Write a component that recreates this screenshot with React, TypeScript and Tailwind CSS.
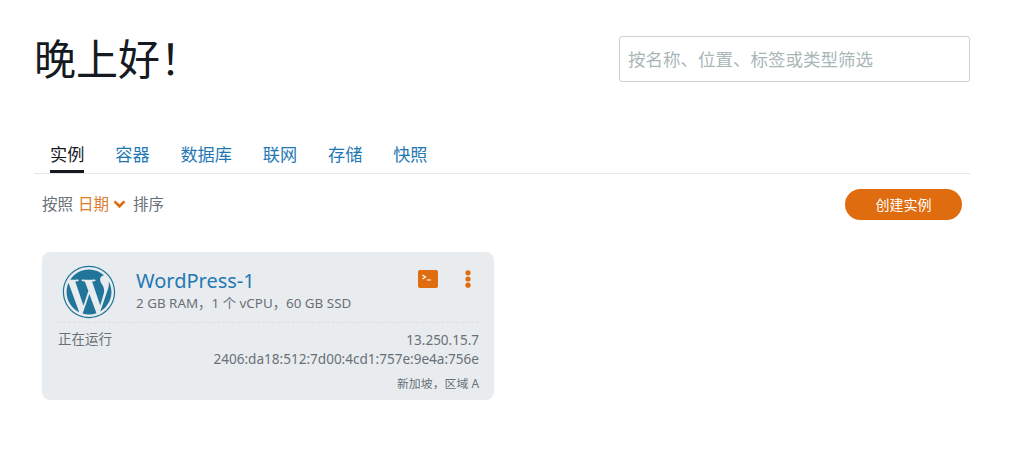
import { FaWordpress } from 'react-icons/fa'

const tabs = [
  { label: '实例', active: true },
  { label: '容器' },
  { label: '数据库' },
  { label: '联网' },
  { label: '存储' },
  { label: '快照' },
]

const fontStack = "font-['Noto_Sans','Noto_Sans_CJK_SC',sans-serif]"

export default function App() {
  return (
    <div className={`h-[465px] w-[1024px] overflow-hidden bg-white ${fontStack}`}>
      <div className="ml-[34px] w-[936px]">
        <header className="flex h-[102px] items-start justify-between pt-[36px]">
          <h1 className="text-[42px] leading-[46px] font-normal text-[#16191f]">晚上好！</h1>
          <input
            type="text"
            placeholder="按名称、位置、标签或类型筛选"
            className="h-[46px] w-[351px] rounded-[3px] border border-[#c9d2d6] bg-white px-2 text-[17.5px] outline-none placeholder:text-[#aab7b8]"
          />
        </header>

        <nav className="mt-[33px] flex h-[39px] items-start gap-[30.8px] border-b border-[#e4e7e9] pl-4 pt-[8px]">
          {tabs.map((tab) => (
            <a
              key={tab.label}
              className={`h-[30px] text-[17.2px] leading-[24px] ${
                tab.active ? 'border-b-[3px] border-[#16191f] text-[#16191f]' : 'text-[#1f78b4]'
              }`}
            >
              {tab.label}
            </a>
          ))}
        </nav>

        <div className="mt-[15px] flex h-[31px] items-center justify-between pl-2 pr-2">
          <div className="flex items-center text-[15.5px] text-[#687078]">
            <span>按照</span>
            <span className="ml-[5px] text-[#e07a2c]">日期</span>
            <svg viewBox="0 0 14 10" className="ml-[4px] h-[9px] w-[13px]" fill="none" stroke="#df6c0f" strokeWidth="3">
              <path d="M1.5 1.5 7 7l5.5-5.5" />
            </svg>
            <span className="ml-[7px]">排序</span>
          </div>
          <button
            type="button"
            className="h-[31px] w-[117px] rounded-full bg-[#df6c0f] text-[14px] text-white"
          >
            创建实例
          </button>
        </div>

        <section className="ml-2 mt-[32px] h-[148px] w-[452px] rounded-[8px] bg-[#e9ecee] pl-[16px] pr-[15px] pt-[13px]">
          <div className="flex h-[58px] items-start border-b border-dashed border-[#d9dee0]">
            <FaWordpress className="ml-[4px] h-[54px] w-[54px] text-[#21759b]" />
            <div className="ml-[20px] flex-1">
              <div className="mt-[2px] text-[20px] leading-[28px] text-[#1f78b4]">WordPress-1</div>
              <div className="text-[13.4px] leading-[17px] text-[#687078]">2 GB RAM，1 个 vCPU，60 GB SSD</div>
            </div>
            <div className="flex items-start gap-[27px] pr-[8px] pt-[5px]">
              <div className="flex h-[18px] w-[20px] rounded-[2px] bg-[#df6c0f] pl-[3px] pt-[3px]">
                <svg viewBox="0 0 14 12" className="h-[12px] w-[14px]" fill="none" stroke="#fff" strokeWidth="1.2">
                  <path d="M1.5 2l3 2-3 2M6 7h4" />
                </svg>
              </div>
              <svg viewBox="0 0 6 18" className="h-[18px] w-[6px]" fill="#df6c0f">
                <circle cx="3" cy="2.8" r="2.6" />
                <circle cx="3" cy="9" r="2.6" />
                <circle cx="3" cy="15.2" r="2.6" />
              </svg>
            </div>
          </div>
          <div className="flex justify-between text-[#687078]">
            <div className="pt-[7px] text-[13.5px] leading-[19px]">正在运行</div>
            <div className="text-right">
              <div className="pt-[8px] text-[13.5px] leading-[19px]">13.250.15.7</div>
              <div className="text-[13.55px] leading-[19px]">2406:da18:512:7d00:4cd1:757e:9e4a:756e</div>
              <div className="mt-[6px] text-[11.9px] leading-[16px]">新加坡，区域 A</div>
            </div>
          </div>
        </section>
      </div>
    </div>
  )
}
